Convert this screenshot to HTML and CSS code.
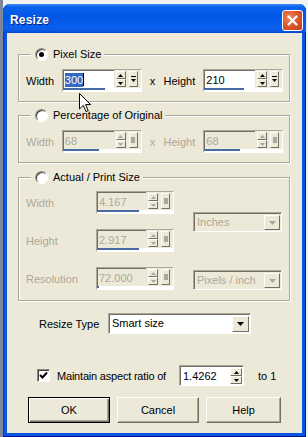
FILE: index.html
```html
<!DOCTYPE html>
<html lang="en">
<head>
    <meta charset="UTF-8">
    <title>Resize</title>
    <link rel="stylesheet" href="styles.css">
</head>
<body>
<div class="screen">
    <div class="window">
        <div class="titlebar">
            <span class="title">Resize</span>
            <span class="close">
                <svg width="11" height="11" viewBox="0 0 11 11"><path d="M1.5 1.5 L9.5 9.5 M9.5 1.5 L1.5 9.5" stroke="#fff" stroke-width="2.2" stroke-linecap="round"/></svg>
            </span>
        </div>
        <div class="client">
            <fieldset class="group">
                <legend><span class="radio on"></span>Pixel Size</legend>
                <div class="size-row">
                    <span class="lbl lbl-w">Width</span>
                    <div class="spin">
                        <div class="spin-row">
                            <span class="spin-field"><span class="sel">300</span><span class="caret"></span></span>
                            <span class="spin-arrows"><span class="arr up"></span><span class="arr down"></span></span>
                            <span class="spin-extra"></span>
                        </div>
                        <div class="spin-bar"><span class="spin-fill" style="width:42px"></span></div>
                    </div>
                    <span class="times">x</span>
                    <span class="lbl lbl-h">Height</span>
                    <div class="spin">
                        <div class="spin-row">
                            <span class="spin-field">210</span>
                            <span class="spin-arrows"><span class="arr up"></span><span class="arr down"></span></span>
                            <span class="spin-extra"></span>
                        </div>
                        <div class="spin-bar"><span class="spin-fill" style="width:40px"></span></div>
                    </div>
                </div>
            </fieldset>

            <fieldset class="group second">
                <legend><span class="radio"></span>Percentage of Original</legend>
                <div class="size-row off">
                    <span class="lbl lbl-w">Width</span>
                    <div class="spin">
                        <div class="spin-row">
                            <span class="spin-field">68</span>
                            <span class="spin-arrows"><span class="arr up"></span><span class="arr down"></span></span>
                            <span class="spin-extra"></span>
                        </div>
                        <div class="spin-bar"><span class="spin-fill" style="width:36px"></span></div>
                    </div>
                    <span class="times">x</span>
                    <span class="lbl lbl-h">Height</span>
                    <div class="spin">
                        <div class="spin-row">
                            <span class="spin-field">68</span>
                            <span class="spin-arrows"><span class="arr up"></span><span class="arr down"></span></span>
                            <span class="spin-extra"></span>
                        </div>
                        <div class="spin-bar"><span class="spin-fill" style="width:36px"></span></div>
                    </div>
                </div>
            </fieldset>

            <fieldset class="group third">
                <legend><span class="radio"></span>Actual / Print Size</legend>
                <div class="print-grid off">
                    <span class="lbl">Width</span>
                    <div class="spin">
                        <div class="spin-row">
                            <span class="spin-field">4.167</span>
                            <span class="spin-arrows"><span class="arr up"></span><span class="arr down"></span></span>
                            <span class="spin-extra"></span>
                        </div>
                        <div class="spin-bar"><span class="spin-fill" style="width:42px"></span></div>
                    </div>
                    <div class="combo unit">
                        <span class="combo-text">Inches</span>
                        <span class="combo-btn"></span>
                    </div>
                    <span class="lbl">Height</span>
                    <div class="spin">
                        <div class="spin-row">
                            <span class="spin-field">2.917</span>
                            <span class="spin-arrows"><span class="arr up"></span><span class="arr down"></span></span>
                            <span class="spin-extra"></span>
                        </div>
                        <div class="spin-bar"><span class="spin-fill" style="width:42px"></span></div>
                    </div>
                    <span class="lbl">Resolution</span>
                    <div class="spin">
                        <div class="spin-row">
                            <span class="spin-field">72.000</span>
                            <span class="spin-arrows"><span class="arr up"></span><span class="arr down"></span></span>
                            <span class="spin-extra"></span>
                        </div>
                        <div class="spin-bar"><span class="spin-fill" style="width:2px"></span></div>
                    </div>
                    <div class="combo res">
                        <span class="combo-text">Pixels / inch</span>
                        <span class="combo-btn"></span>
                    </div>
                </div>
            </fieldset>

            <div class="type-row">
                <span class="type-label">Resize Type</span>
                <div class="combo type">
                    <span class="combo-text">Smart size</span>
                    <span class="combo-btn"></span>
                </div>
            </div>

            <div class="ratio-row">
                <span class="check">
                    <svg width="9" height="9" viewBox="0 0 9 9"><path d="M1 4 L3.5 6.5 L8 1.5" fill="none" stroke="#000" stroke-width="2"/></svg>
                </span>
                <span class="ratio-label">Maintain aspect ratio of</span>
                <div class="ratio-input">
                    <span class="ratio-field">1.4262</span>
                    <span class="spin-arrows"><span class="arr up"></span><span class="arr down"></span></span>
                </div>
                <span class="ratio-to">to 1</span>
            </div>

            <div class="button-row">
                <button class="btn default">OK</button>
                <button class="btn">Cancel</button>
                <button class="btn help">Help</button>
            </div>
        </div>
    </div>
    <svg class="cursor" width="13" height="20" viewBox="0 0 13 20">
        <path d="M0.5 0.5 L0.5 16 L4.3 12.4 L7 18.6 L9.2 17.6 L6.6 11.6 L11.6 11.6 Z" fill="#fff" stroke="#000" stroke-width="1"/>
    </svg>
</div>
</body>
</html>
```

FILE: styles.css
```css
html, body {
    margin: 0;
    padding: 0;
}

body {
    font-family: "Liberation Sans", Arial, sans-serif;
    font-size: 11px;
    color: #000;
}

.screen {
    position: relative;
    width: 308px;
    height: 437px;
    padding: 4px 0 0 3px;
    box-sizing: border-box;
    background: linear-gradient(to right, #7c879b 0, #7c879b 3px, #f3f3f3 3px);
    overflow: hidden;
}

.window {
    width: 303px;
    height: 433px;
    display: flex;
    flex-direction: column;
    background: #0a55e2;
    border-radius: 7px 7px 0 0;
    box-shadow: inset 1px 0 #0831d9, inset -1px 0 #00138c, inset 0 -1px #00138c;
}

.titlebar {
    height: 29px;
    display: flex;
    align-items: center;
    justify-content: space-between;
    padding: 0 3px 0 7px;
    border-radius: 7px 7px 0 0;
    background: linear-gradient(180deg, #3d8ef6 0%, #0a62ec 10%, #0057e6 45%, #0a60ee 80%, #0b5ae6 92%, #0043cc 100%);
}

.title {
    font-size: 12px;
    font-weight: bold;
    color: #fff;
    text-shadow: 1px 1px 0 #0a1e7a;
    padding-top: 3px;
    letter-spacing: 0.2px;
}

.close {
    width: 21px;
    height: 21px;
    box-sizing: border-box;
    margin-top: 3px;
    border: 1px solid #fff;
    border-radius: 3px;
    background: radial-gradient(circle at 35% 35%, #ec8a66 0%, #dc5a30 45%, #c2401c 100%);
    display: flex;
    align-items: center;
    justify-content: center;
}

.client {
    flex: 1;
    margin: 0 4px 4px;
    padding-top: 14px;
    background: #ece9d8;
}

/* group boxes */
.group {
    width: 272px;
    box-sizing: border-box;
    margin: 0 0 0 11px;
    padding: 8px 6px 9px 7px;
    border: 1px solid #aca899;
    box-shadow: inset 1px 1px #fff, 1px 1px #fff;
    min-inline-size: 0;
}

.group.second {
    margin-top: 6px;
}

.group.third {
    margin-top: 7px;
    padding: 7px 6px 10px 7px;
}

.group legend {
    display: flex;
    align-items: center;
    gap: 5px;
    margin-left: 5px;
    padding: 0 3px 0 4px;
    line-height: 14px;
    background: #ece9d8;
}

.radio {
    width: 13px;
    height: 13px;
    box-sizing: border-box;
    border-radius: 50%;
    background: #fff;
    border: 1px solid;
    border-color: #8d8a7d #fff #fff #8d8a7d;
    box-shadow: inset 1px 1px #404040;
    position: relative;
}

.radio.on::after {
    content: "";
    position: absolute;
    left: 3px;
    top: 3px;
    width: 5px;
    height: 5px;
    border-radius: 50%;
    background: #000;
}

.size-row {
    display: flex;
    align-items: center;
    height: 23px;
}

.lbl-w {
    width: 36px;
}

.times {
    width: 22px;
    text-align: center;
}

.lbl-h {
    width: 40px;
}

.off,
.off .spin-field {
    color: #aca899;
}

/* spin edit with slider */
.spin {
    width: 80px;
    height: 23px;
    box-sizing: border-box;
    border: 1px solid;
    border-color: #aca899 #fff #fff #aca899;
    background: #ece9d8;
    display: flex;
    flex-direction: column;
}

.spin-row {
    display: flex;
    height: 18px;
}

.spin-field {
    width: 51px;
    box-sizing: border-box;
    padding-left: 1px;
    background: #fff;
    border-top: 1px solid #716f64;
    border-left: 1px solid #716f64;
    display: flex;
    align-items: center;
    line-height: 14px;
}

.off .spin-field {
    background: #ece9d8;
}

.sel {
    background: #316ac5;
    color: #fff;
}

.caret {
    width: 1px;
    height: 13px;
    background: #000;
}

.spin-arrows {
    width: 10px;
    margin: 1px 0 1px 2px;
    display: flex;
    flex-direction: column;
}

.arr {
    flex: 1;
    box-sizing: border-box;
    border: 1px solid;
    border-color: #fff #716f64 #716f64 #fff;
    background: #ece9d8 no-repeat center;
}

.arr.up {
    background-image: url("data:image/svg+xml,%3Csvg xmlns='http://www.w3.org/2000/svg' width='5' height='3'%3E%3Cpath d='M2.5 0 L5 3 L0 3 Z' fill='%23000'/%3E%3C/svg%3E");
}

.arr.down {
    background-image: url("data:image/svg+xml,%3Csvg xmlns='http://www.w3.org/2000/svg' width='5' height='3'%3E%3Cpath d='M0 0 L5 0 L2.5 3 Z' fill='%23000'/%3E%3C/svg%3E");
}

.off .arr.up {
    background-image: url("data:image/svg+xml,%3Csvg xmlns='http://www.w3.org/2000/svg' width='5' height='3'%3E%3Cpath d='M2.5 0 L5 3 L0 3 Z' fill='%23aca899'/%3E%3C/svg%3E");
}

.off .arr.down {
    background-image: url("data:image/svg+xml,%3Csvg xmlns='http://www.w3.org/2000/svg' width='5' height='3'%3E%3Cpath d='M0 0 L5 0 L2.5 3 Z' fill='%23aca899'/%3E%3C/svg%3E");
}

.spin-extra {
    width: 9px;
    margin: 1px 0 1px 3px;
    box-sizing: border-box;
    border: 1px solid;
    border-color: #fff #716f64 #716f64 #fff;
    background: #ece9d8 no-repeat center;
    background-image: url("data:image/svg+xml,%3Csvg xmlns='http://www.w3.org/2000/svg' width='5' height='6'%3E%3Cpath d='M0 0 H5 V1 H0 Z M0 3 L5 3 L2.5 6 Z' fill='%23000'/%3E%3C/svg%3E");
}

.off .spin-extra {
    background-image: url("data:image/svg+xml,%3Csvg xmlns='http://www.w3.org/2000/svg' width='4' height='6'%3E%3Crect width='4' height='6' fill='%23aca899'/%3E%3C/svg%3E");
}

.spin-bar {
    height: 3px;
    background: #fff;
}

.spin-fill {
    display: block;
    height: 2px;
    background: #4a6aa6;
}

/* print size grid */
.print-grid {
    display: grid;
    grid-template-columns: 70px 78px 108px;
    grid-template-rows: 23px 23px 23px;
    row-gap: 15px;
    align-items: center;
}

.print-grid .spin {
    width: 78px;
}

.print-grid .spin-field {
    width: 49px;
}

.combo {
    height: 20px;
    box-sizing: border-box;
    border: 1px solid;
    border-color: #aca899 #fff #fff #aca899;
    box-shadow: inset 1px 1px #716f64;
    display: flex;
    align-items: stretch;
    background: #ece9d8;
}

.combo-text {
    flex: 1;
    padding: 2px 0 0 3px;
    line-height: 14px;
}

.combo-btn {
    width: 16px;
    margin: 2px 1px 1px 0;
    box-sizing: border-box;
    border: 1px solid;
    border-color: #fff #716f64 #716f64 #fff;
    background: #ece9d8 no-repeat center;
    background-image: url("data:image/svg+xml,%3Csvg xmlns='http://www.w3.org/2000/svg' width='7' height='4'%3E%3Cpath d='M0 0 L7 0 L3.5 4 Z' fill='%23000'/%3E%3C/svg%3E");
}

.off .combo-btn {
    background-image: url("data:image/svg+xml,%3Csvg xmlns='http://www.w3.org/2000/svg' width='7' height='4'%3E%3Cpath d='M0 0 L7 0 L3.5 4 Z' fill='%23aca899'/%3E%3C/svg%3E");
}

.combo.unit {
    grid-column: 3;
    grid-row: 1 / span 2;
    width: 89px;
    margin-left: 19px;
    margin-top: 1px;
}

.combo.res {
    grid-column: 3;
    grid-row: 3;
    width: 89px;
    margin-left: 19px;
    margin-top: 3px;
}

/* resize type */
.type-row {
    display: flex;
    align-items: center;
    margin: 12px 0 0 32px;
}

.type-label {
    width: 69px;
}

.combo.type {
    width: 143px;
    height: 21px;
    background: #fff;
}

.combo.type .combo-btn {
    width: 17px;
}

/* aspect ratio */
.ratio-row {
    display: flex;
    align-items: center;
    margin: 31px 0 0 30px;
    height: 21px;
}

.check {
    width: 13px;
    height: 13px;
    box-sizing: border-box;
    border: 1px solid;
    border-color: #8d8a7d #fff #fff #8d8a7d;
    box-shadow: inset 1px 1px #404040;
    background: #fff;
    display: flex;
    align-items: center;
    justify-content: center;
}

.ratio-label {
    margin-left: 7px;
    width: 122px;
    letter-spacing: -0.2px;
}

.ratio-input {
    width: 65px;
    height: 21px;
    box-sizing: border-box;
    border: 1px solid;
    border-color: #aca899 #fff #fff #aca899;
    box-shadow: inset 1px 1px #716f64;
    background: #fff;
    display: flex;
}

.ratio-field {
    flex: 1;
    padding: 3px 0 0 3px;
    line-height: 14px;
}

.ratio-input .spin-arrows {
    width: 12px;
    margin: 2px 1px 1px 0;
}

.ratio-to {
    margin-left: 14px;
}

/* buttons */
.button-row {
    display: flex;
    gap: 7px;
    margin: 11px 0 0 21px;
}

.btn {
    width: 82px;
    height: 26px;
    box-sizing: border-box;
    padding: 0;
    font-family: "Liberation Sans", Arial, sans-serif;
    font-size: 11px;
    color: #000;
    background: #ece9d8;
    border: 1px solid;
    border-color: #fff #716f64 #716f64 #fff;
    box-shadow: inset -1px -1px #aca899;
}

.btn.help {
    width: 75px;
}

.btn.default {
    border: 1px solid #000;
    box-shadow: inset 1px 1px #fff, inset -1px -1px #716f64, inset -2px -2px #aca899;
}

.cursor {
    position: absolute;
    left: 79px;
    top: 93px;
}
```
